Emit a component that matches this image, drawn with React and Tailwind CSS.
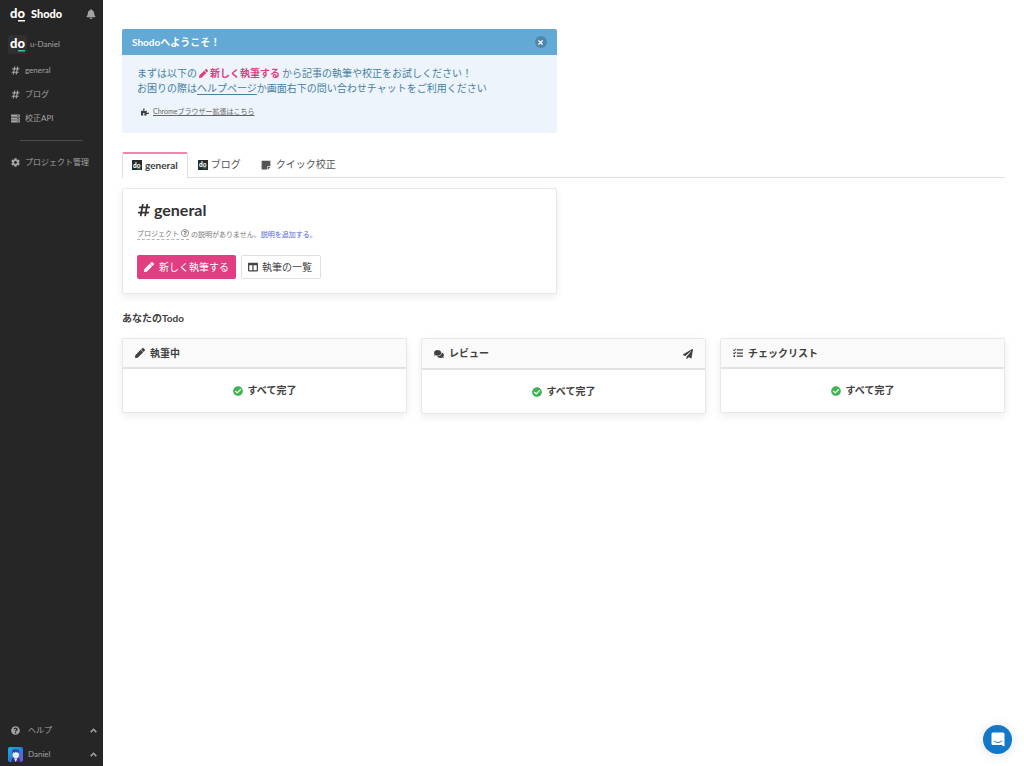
import {
  FaBell,
  FaCheckCircle,
  FaChevronUp,
  FaCog,
  FaColumns,
  FaComments,
  FaHashtag,
  FaPaperPlane,
  FaPen,
  FaPuzzlePiece,
  FaQuestionCircle,
  FaRegQuestionCircle,
  FaServer,
  FaStickyNote,
  FaTasks,
  FaTimes
} from 'react-icons/fa'

const PROJECT_LINKS = [
  { label: 'general', icon: FaHashtag },
  { label: 'ブログ', icon: FaHashtag },
  { label: '校正API', icon: FaServer }
]

const TODOS = [
  { title: '執筆中', icon: FaPen, head: 'h-[30px]' },
  { title: 'レビュー', icon: FaComments, head: 'h-[31px]', action: true },
  { title: 'チェックリスト', icon: FaTasks, head: 'h-[30px]' }
]

// Brand mark: "do" with a bar under the o.
function Logo({ className = '', bar = '#ffffff' }) {
  return (
    <svg viewBox="0 0 16 18" className={className} aria-hidden>
      <text x="0" y="13" fill="#ffffff" fontSize="13" fontWeight="900" fontFamily="Lato, sans-serif">do</text>
      <rect x="8" y="15" width="7" height="1.500" fill={bar} />
    </svg>
  )
}

function TabLogo() {
  return (
    <span className="flex size-[10px] items-center justify-center bg-[#262b2b]">
      <Logo className="h-[9px] w-2" bar="#2ec4b0" />
    </span>
  )
}

// Default user picture: a suited figure on a blue-violet gradient.
function Avatar() {
  return (
    <svg viewBox="0 0 30 30" className="size-[15px] rounded-xs" aria-hidden>
      <defs>
        <linearGradient id="avatar" x1="0" y1="0" x2="1" y2="1">
          <stop offset="0" stopColor="#12b4dc" />
          <stop offset="0.5" stopColor="#2a7fe0" />
          <stop offset="1" stopColor="#8a4ad8" />
        </linearGradient>
      </defs>
      <rect width="30" height="30" fill="url(#avatar)" />
      <path d="M6 30l2-7 5-3h5l5 3 2 7z" fill="#2c3578" />
      <path d="M9 13c0-6 13-6 13 0v3c0 5-4 7-6.500 7S9 20 9 16z" fill="#e4edfb" />
      <path d="M8 13C7 5 12 4 16 5c6 0 8 4 6 9l-2-4-2 2-2-3-3 3-2-2-2 4z" fill="#2a4a9c" />
      <path d="M12 22l3.500 8L19 22l-3.500 2z" fill="#ffffff" />
    </svg>
  )
}

function Sidebar() {
  return (
    <aside className="sticky top-0 flex h-screen w-[103px] shrink-0 flex-col bg-[#262626] text-[8px] text-[#a3a3a3]">
      <header className="flex h-7 items-center justify-between pl-[10px] pr-[7px]">
        <a href="#home" className="flex items-center gap-[5px] text-[11px] font-black text-white">
          <Logo className="h-[18px] w-4" />
          Shodo
        </a>
        <button type="button" aria-label="お知らせ">
          <FaBell size={10} />
        </button>
      </header>

      <a href="#team" className="mt-0.5 flex h-7 items-center gap-[3px] pl-2">
        <span className="flex size-[19px] items-center justify-center rounded-xs bg-[#303030]">
          <Logo className="h-[18px] w-4" bar="#2ec4b0" />
        </span>
        u-Daniel
      </a>

      <nav>
        {PROJECT_LINKS.map(({ label, icon: Icon }) => (
          <a key={label} href="#project" className="flex h-6 items-center gap-[5px] pl-[11px]">
            <Icon size={9} className="shrink-0" />
            {label}
          </a>
        ))}
        <hr className="mx-5 mt-[10px] mb-[9px] border-[#4c4c4c]" />
        <a href="#settings" className="flex h-6 items-center gap-[5px] pl-[11px]">
          <FaCog size={9} className="shrink-0" />
          プロジェクト管理
        </a>
      </nav>

      <div className="mt-auto">
        <button type="button" className="flex h-6 w-full items-center pl-[11px] pr-[6px]">
          <FaQuestionCircle size={9} />
          <span className="ml-2">ヘルプ</span>
          <FaChevronUp size={7} className="ml-auto stroke-current stroke-[50px]" />
        </button>
        <button type="button" className="flex h-6 w-full items-center pl-2 pr-[6px]">
          <Avatar />
          <span className="ml-[5px]">Daniel</span>
          <FaChevronUp size={7} className="ml-auto stroke-current stroke-[50px]" />
        </button>
      </div>
    </aside>
  )
}

function Welcome() {
  return (
    <section className="overflow-hidden rounded-xs bg-[#edf4fb] text-[#4681a3]">
      <header className="flex h-[26px] items-center justify-between bg-[#62a9d6] px-[10px] font-bold text-white">
        <h2>Shodoへようこそ！</h2>
        <button
          type="button"
          aria-label="閉じる"
          className="flex size-3 items-center justify-center rounded-full bg-[#4e87ab]"
        >
          <FaTimes size={7} />
        </button>
      </header>
      <div className="px-[15px] pt-[11px] pb-[14px] leading-[15px]">
        <p>
          まずは以下の
          <strong className="mx-[2px] text-[#e13d82]">
            <FaPen size={9} className="mr-[2px] mb-[2px] inline" />
            新しく執筆する
          </strong>
          から記事の執筆や校正をお試しください！
        </p>
        <p>
          お困りの際は
          <a href="#help" className="underline underline-offset-2">ヘルプページ</a>
          か画面右下の問い合わせチャットをご利用ください
        </p>
        <p className="mt-2 flex items-center gap-1 pl-1 text-[7px] text-[#666666]">
          <FaPuzzlePiece size={8} className="text-[#404040]" />
          <a href="#extension" className="underline underline-offset-1">Chromeブラウザー拡張はこちら</a>
        </p>
      </div>
    </section>
  )
}

function Tabs() {
  return (
    <nav className="mt-[19px] flex h-[26px] border-b border-[#dedede] text-[#555555]">
      <a
        href="#general"
        className="-mb-px flex items-center gap-[3px] rounded-t-xs border-x border-t-2 border-x-[#dedede] border-t-[#f285ae] bg-white px-[9px] pb-[2px] font-bold text-[#404040]"
      >
        <TabLogo />
        general
      </a>
      <a href="#blog" className="flex items-center gap-[3px] px-[10px]">
        <TabLogo />
        ブログ
      </a>
      <a href="#quick" className="flex items-center gap-[5px] px-[10px]">
        <FaStickyNote size={10} />
        クイック校正
      </a>
    </nav>
  )
}

function ProjectCard() {
  return (
    <section className="rounded-xs border border-[#e8e8e8] bg-white px-[14px] pt-[11px] pb-[14px] shadow-[0_3px_8px_rgba(0,0,0,0.08)]">
      <h1 className="flex items-center gap-[3px] text-[16px] leading-5 font-bold text-[#333333]">
        <FaHashtag size={14} />
        general
      </h1>
      <p className="mt-[7px] flex items-center text-[7px] leading-3 text-[#777777]">
        <span className="mr-[2px] flex items-center gap-[2px] border-b border-dashed border-[#b5b5b5]">
          プロジェクト
          <FaRegQuestionCircle size={8} />
        </span>
        の説明がありません。
        <a href="#description" className="text-[#5566d6]">説明を追加する。</a>
      </p>
      <div className="mt-[15px] flex gap-[5px]">
        <button
          type="button"
          className="flex h-6 items-center gap-[5px] rounded-xs bg-[#e13d82] px-[7px] text-white"
        >
          <FaPen size={10} />
          新しく執筆する
        </button>
        <button
          type="button"
          className="flex h-6 items-center gap-1 rounded-xs border border-[#e0e0e0] bg-white pl-[6px] pr-2 text-[#444444]"
        >
          <FaColumns size={10} />
          執筆の一覧
        </button>
      </div>
    </section>
  )
}

function TodoCard({ title, icon: Icon, head, action }) {
  return (
    <section className="rounded-xs border border-[#e8e8e8] bg-white font-bold text-[#404040] shadow-[0_3px_8px_rgba(0,0,0,0.08)]">
      <header className={`flex items-center gap-[5px] border-b-2 border-[#e2e2e2] bg-[#fafafa] px-3 ${head}`}>
        <Icon size={10} />
        <h3>{title}</h3>
        {action && (
          <button type="button" aria-label="レビューを依頼" className="ml-auto">
            <FaPaperPlane size={10} />
          </button>
        )}
      </header>
      <p className="flex h-[43px] items-center justify-center gap-[5px]">
        <FaCheckCircle size={10} className="text-[#3fb34f]" />
        すべて完了
      </p>
    </section>
  )
}

export default function App() {
  return (
    <div className="flex min-h-screen bg-white font-[Lato,'Noto_Sans_CJK_JP',sans-serif] text-[10px] text-[#404040]">
      <Sidebar />
      <main className="min-w-0 flex-1 px-[19px] pt-[29px]">
        <div className="grid grid-cols-2 gap-[14px]">
          <Welcome />
        </div>
        <Tabs />
        <div className="mt-[10px] grid grid-cols-2 gap-[14px]">
          <ProjectCard />
        </div>
        <h2 className="mt-4 leading-4 font-bold">あなたのTodo</h2>
        <div className="mt-3 grid grid-cols-3 items-start gap-[14px]">
          {TODOS.map((todo) => (
            <TodoCard key={todo.title} {...todo} />
          ))}
        </div>
      </main>

      {/* Support chat launcher */}
      <button
        type="button"
        aria-label="チャット"
        className="fixed right-3 bottom-3 flex size-[29px] items-center justify-center rounded-full bg-[#1478c8] shadow-[0_1px_12px_rgba(0,0,0,0.12)]"
      >
        <svg viewBox="0 0 28 30" className="h-[15px] w-[14px]" aria-hidden>
          <path d="M4 1h20a3 3 0 0 1 3 3v25l-6-3H4a3 3 0 0 1-3-3V4a3 3 0 0 1 3-3z" fill="#ffffff" />
          <path d="M6 18c5 4 11 4 16 0" fill="none" stroke="#1478c8" strokeWidth="2" strokeLinecap="round" />
        </svg>
      </button>
    </div>
  )
}
